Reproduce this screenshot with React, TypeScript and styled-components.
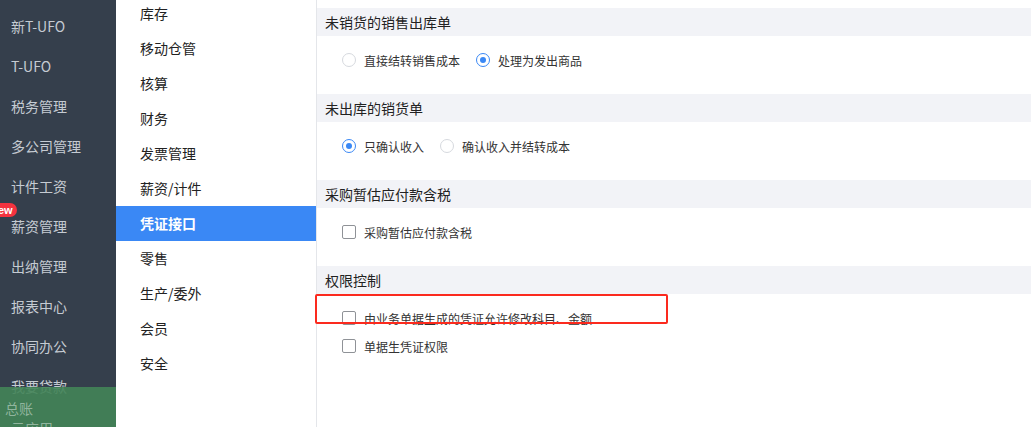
import React from "react";
import styled, { createGlobalStyle } from "styled-components";

const Global = createGlobalStyle`
  html, body { margin: 0; padding: 0; overflow: hidden; background: #fff; }
  body { font-family: "Noto Sans CJK SC", "Liberation Sans", sans-serif; }
  * { box-sizing: border-box; }
`;

const Page = styled.div`
  position: relative;
  display: flex;
  width: 1031px;
  height: 427px;
  overflow: hidden;
`;

const Sidebar = styled.nav`
  position: relative;
  width: 116px;
  flex: none;
  background: #353f4c;
  padding-top: 6px;
  overflow: hidden;
`;

const SideItem = styled.div`
  position: relative;
  height: 40px;
  line-height: 40px;
  padding-left: 11px;
  font-size: 14px;
  color: #c5cbd2;
  white-space: nowrap;
`;

const Badge = styled.span`
  position: absolute;
  left: -15px;
  top: -3px;
  height: 14px;
  line-height: 14px;
  padding: 0 4px 0 5px;
  border-radius: 7px;
  background: #f5333f;
  color: #fff;
  font-family: "Liberation Sans", sans-serif;
  font-weight: bold;
  font-size: 11px;
`;

const GreenBar = styled.div`
  position: absolute;
  left: 0;
  right: 0;
  bottom: 0;
  height: 40px;
  padding-top: 11px;
  background: rgba(66, 132, 88, 0.9);
  display: flex;
  flex-direction: column;
`;

const GreenTitle = styled.div<{ $indent: number }>`
  flex: none;
  padding-left: ${(p) => p.$indent}px;
  font-size: 14px;
  line-height: 20px;
  height: 20px;
  color: rgba(160, 192, 172, 0.85);
  white-space: nowrap;
`;

const SubNav = styled.nav`
  width: 201px;
  flex: none;
  background: #fff;
  border-right: 1px solid #e4e6ea;
  overflow: hidden;
`;

const SubList = styled.div`
  margin-top: -4px;
`;

const SubItem = styled.div<{ $active?: boolean }>`
  height: 35px;
  line-height: 35px;
  padding-left: 24px;
  font-size: 14px;
  color: ${(p) => (p.$active ? "#fff" : "#222")};
  background: ${(p) => (p.$active ? "#3a88f5" : "transparent")};
  font-weight: ${(p) => (p.$active ? "bold" : "normal")};
`;

const Main = styled.main`
  flex: 1;
  padding-top: 8px;
  background: #fff;
`;

const SectionHeader = styled.div`
  height: 28px;
  line-height: 28px;
  background: #f2f3f7;
  padding-left: 8px;
  font-size: 14px;
  color: #222;
`;

const SectionBody = styled.div`
  height: 58px;
  padding: 16px 0 0 25px;
`;

const Stack = styled.div`
  display: flex;
  flex-direction: column;
  gap: 12px;
`;

const OptionRow = styled.div`
  display: flex;
  align-items: center;
  gap: 16px;
`;

const Option = styled.label`
  display: flex;
  align-items: center;
  height: 16px;
  gap: 8px;
  font-size: 12px;
  color: #333;
  white-space: nowrap;
`;

const Radio = styled.span<{ $checked?: boolean }>`
  width: 14px;
  height: 14px;
  border-radius: 50%;
  border: 1px solid ${(p) => (p.$checked ? "#3a88f5" : "#d6d9de")};
  background: #fff;
  display: flex;
  align-items: center;
  justify-content: center;
  flex: none;
  &::after {
    content: "";
    width: 6px;
    height: 6px;
    border-radius: 50%;
    background: ${(p) => (p.$checked ? "#3a88f5" : "transparent")};
  }
`;

const Checkbox = styled.span`
  width: 14px;
  height: 14px;
  border-radius: 2px;
  border: 1px solid #8f9297;
  background: #fff;
  flex: none;
`;

const Highlight = styled.div`
  position: absolute;
  left: 315px;
  top: 294px;
  width: 353px;
  height: 30px;
  border: 2px solid #fb2a1e;
  border-radius: 2px;
  pointer-events: none;
`;

const sideItems = [
  "新T-UFO",
  "T-UFO",
  "税务管理",
  "多公司管理",
  "计件工资",
  "薪资管理",
  "出纳管理",
  "报表中心",
  "协同办公",
  "我要贷款",
];

const subItems = [
  "库存",
  "移动仓管",
  "核算",
  "财务",
  "发票管理",
  "薪资/计件",
  "凭证接口",
  "零售",
  "生产/委外",
  "会员",
  "安全",
];

export default function App() {
  return (
    <>
      <Global />
      <Page>
        <Sidebar>
          {sideItems.map((s) => (
            <SideItem key={s}>
              {s === "薪资管理" && <Badge>New</Badge>}
              {s}
            </SideItem>
          ))}
          <GreenBar>
            <GreenTitle $indent={5}>总账</GreenTitle>
            <GreenTitle $indent={11}>云应用</GreenTitle>
          </GreenBar>
        </Sidebar>
        <SubNav>
          <SubList>
            {subItems.map((s) => (
              <SubItem key={s} $active={s === "凭证接口"}>
                {s}
              </SubItem>
            ))}
          </SubList>
        </SubNav>
        <Main>
          <SectionHeader>未销货的销售出库单</SectionHeader>
          <SectionBody>
            <OptionRow>
              <Option>
                <Radio />
                直接结转销售成本
              </Option>
              <Option>
                <Radio $checked />
                处理为发出商品
              </Option>
            </OptionRow>
          </SectionBody>
          <SectionHeader>未出库的销货单</SectionHeader>
          <SectionBody>
            <OptionRow>
              <Option>
                <Radio $checked />
                只确认收入
              </Option>
              <Option>
                <Radio />
                确认收入并结转成本
              </Option>
            </OptionRow>
          </SectionBody>
          <SectionHeader>采购暂估应付款含税</SectionHeader>
          <SectionBody>
            <Option>
              <Checkbox />
              采购暂估应付款含税
            </Option>
          </SectionBody>
          <SectionHeader>权限控制</SectionHeader>
          <SectionBody>
            <Stack>
              <Option>
                <Checkbox />
                由业务单据生成的凭证允许修改科目、金额
              </Option>
              <Option>
                <Checkbox />
                单据生凭证权限
              </Option>
            </Stack>
          </SectionBody>
        </Main>
        <Highlight />
      </Page>
    </>
  );
}
